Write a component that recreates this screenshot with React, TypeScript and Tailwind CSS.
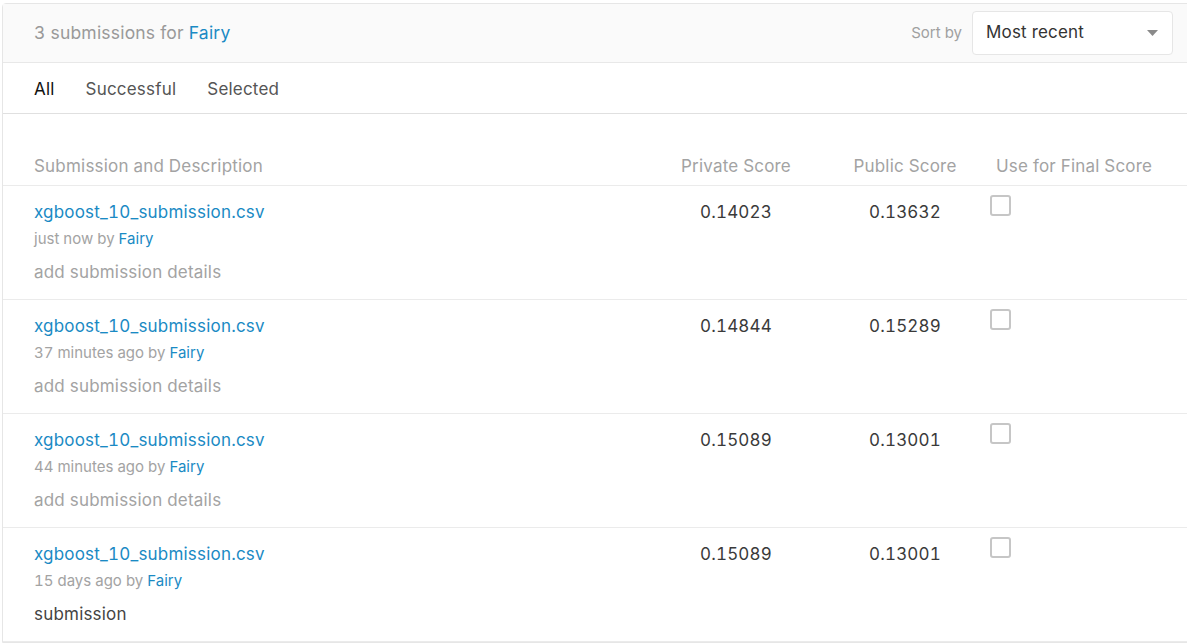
const rows = [
  { when: "just now", priv: "0.14023", pub: "0.13632", desc: "add submission details", placeholder: true },
  { when: "37 minutes ago", priv: "0.14844", pub: "0.15289", desc: "add submission details", placeholder: true },
  { when: "44 minutes ago", priv: "0.15089", pub: "0.13001", desc: "add submission details", placeholder: true },
  { when: "15 days ago", priv: "0.15089", pub: "0.13001", desc: "submission", placeholder: false },
];

export default function App() {
  return (
    <div className="w-[1187px] h-[643px] overflow-hidden bg-white pt-[3px] pl-[2px] font-['Inter',sans-serif] tabular-nums tracking-[0.2px]">
      <div className="w-[1200px] border border-[#e6e6e6] rounded-tl-[4px] bg-white">
        {/* header */}
        <div className="h-[59px] flex items-center bg-[#fafafa] border-b border-[#e8e8e8] pl-[31px]">
          <div className="text-[17.5px] text-[#999999] pt-[1px]">
            3 submissions for <span className="text-[#1a8ac4]">Fairy</span>
          </div>
          <div className="ml-auto mr-[28px] flex items-center">
            <span className="text-[15px] text-[#a0a0a0] mr-[10px] tracking-normal">Sort by</span>
            <div className="w-[201px] h-[44px] bg-white border border-[#e6e6e6] rounded-[4px] flex items-center pl-[13px] pr-[14px]">
              <span className="text-[17px] text-[#333333]">Most recent</span>
              <svg className="ml-auto" width="11" height="6" viewBox="0 0 11 6">
                <path d="M0 0 L11 0 L5.5 6 Z" fill="#8a8a8a" />
              </svg>
            </div>
          </div>
        </div>

        {/* tabs */}
        <div className="h-[51px] flex items-center gap-[31px] pl-[31px] pt-[3px] border-b border-[#e0e0e0] text-[17px]">
          <span className="text-[#111111]">All</span>
          <span className="text-[#555555]">Successful</span>
          <span className="text-[#555555]">Selected</span>
        </div>

        {/* table header */}
        <div className="flex items-end pl-[31px] pt-[40px] pb-[7px] border-b border-[#ebebeb] text-[17px] text-[#a3a3a3] leading-[24px]">
          <div className="w-[626px]">Submission and Description</div>
          <div className="w-[152px] text-center">Private Score</div>
          <div className="w-[14px]" />
          <div className="w-[158px] text-center">Public Score</div>
          <div className="pl-[12px]">Use for Final Score</div>
        </div>

        {rows.map((r, i) => (
          <div key={i} className="h-[114px] flex pl-[31px] pt-[14px] border-b border-[#ebebeb]">
            <div className="w-[626px] flex flex-col">
              <span className="text-[17px] leading-[24px] text-[#1a8ac4]">xgboost_10_submission.csv</span>
              <span className="text-[15px] leading-[20px] mt-[5px] text-[#a3a3a3] tracking-normal">
                {r.when} by <span className="text-[#1a8ac4]">Fairy</span>
              </span>
              <span
                className={
                  r.placeholder
                    ? "text-[17px] leading-[24px] mt-[11px] text-[#a3a3a3]"
                    : "text-[17px] leading-[24px] mt-[11px] text-[#444444]"
                }
              >
                {r.desc}
              </span>
            </div>
            <div className="w-[152px] text-center text-[17px] leading-[24px] text-[#3a3a3a]">{r.priv}</div>
            <div className="w-[14px]" />
            <div className="w-[158px] text-center text-[17px] leading-[24px] text-[#3a3a3a]">{r.pub}</div>
            <div className="pl-[6px]">
              <div className="w-[21px] h-[21px] -mt-[5px] border-2 border-[#c6c6c6] rounded-[3px] bg-white" />
            </div>
          </div>
        ))}
      </div>
    </div>
  );
}
